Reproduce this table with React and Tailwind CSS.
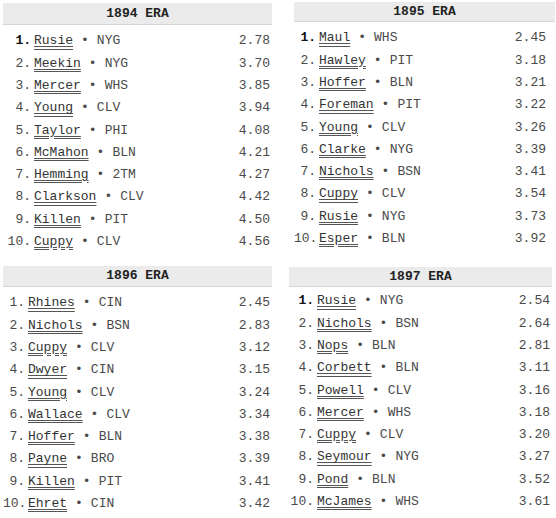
const panels = [
  {
    title: "1894 ERA",
    wrap: "ml-[3px] mt-[3px] w-[269px]",
    head: "h-[22px]",
    list: "mt-[5px]",
    rank: "w-[28px]",
    era: "pr-[2px]",
    bold: true,
    rows: [
      ["Rusie", "NYG", "2.78"],
      ["Meekin", "NYG", "3.70"],
      ["Mercer", "WHS", "3.85"],
      ["Young", "CLV", "3.94"],
      ["Taylor", "PHI", "4.08"],
      ["McMahon", "BLN", "4.21"],
      ["Hemming", "2TM", "4.27"],
      ["Clarkson", "CLV", "4.42"],
      ["Killen", "PIT", "4.50"],
      ["Cuppy", "CLV", "4.56"],
    ],
  },
  {
    title: "1895 ERA",
    wrap: "ml-[22px] mt-[2px] w-[261px]",
    head: "h-[20px]",
    list: "mt-[5px]",
    rank: "w-[22px]",
    era: "pr-[9px]",
    bold: true,
    rows: [
      ["Maul", "WHS", "2.45"],
      ["Hawley", "PIT", "3.18"],
      ["Hoffer", "BLN", "3.21"],
      ["Foreman", "PIT", "3.22"],
      ["Young", "CLV", "3.26"],
      ["Clarke", "NYG", "3.39"],
      ["Nichols", "BSN", "3.41"],
      ["Cuppy", "CLV", "3.54"],
      ["Rusie", "NYG", "3.73"],
      ["Esper", "BLN", "3.92"],
    ],
  },
  {
    title: "1896 ERA",
    wrap: "ml-[3px] mt-0 w-[269px]",
    head: "h-[21px]",
    list: "mt-[5px]",
    rank: "w-[22px]",
    era: "pr-[2px]",
    bold: false,
    rows: [
      ["Rhines", "CIN", "2.45"],
      ["Nichols", "BSN", "2.83"],
      ["Cuppy", "CLV", "3.12"],
      ["Dwyer", "CIN", "3.15"],
      ["Young", "CLV", "3.24"],
      ["Wallace", "CLV", "3.34"],
      ["Hoffer", "BLN", "3.38"],
      ["Payne", "BRO", "3.39"],
      ["Killen", "PIT", "3.41"],
      ["Ehret", "CIN", "3.42"],
    ],
  },
  {
    title: "1897 ERA",
    wrap: "ml-[17px] mt-[1px] w-[263px]",
    head: "h-[20px]",
    list: "mt-[3px]",
    rank: "w-[25px]",
    era: "pr-[2px]",
    bold: true,
    rows: [
      ["Rusie", "NYG", "2.54"],
      ["Nichols", "BSN", "2.64"],
      ["Nops", "BLN", "2.81"],
      ["Corbett", "BLN", "3.11"],
      ["Powell", "CLV", "3.16"],
      ["Mercer", "WHS", "3.18"],
      ["Cuppy", "CLV", "3.20"],
      ["Seymour", "NYG", "3.27"],
      ["Pond", "BLN", "3.52"],
      ["McJames", "WHS", "3.61"],
    ],
  },
];

function Panel({ p }) {
  return (
    <div className={p.wrap}>
      <div
        className={`${p.head} flex items-center justify-center bg-[#ebebeb] border-b border-[#d6d6d6] text-[13px] font-bold text-[#222]`}
      >
        {p.title}
      </div>
      <div className={p.list}>
        {p.rows.map((r, i) => (
          <div key={i} className="h-[22.3px] flex items-center text-[13px] text-[#4a4a4a]">
            <span
              className={`${p.rank} text-right ${
                p.bold && i === 0 ? "font-bold text-[#111]" : ""
              }`}
            >
              {i + 1}.
            </span>
            <span className="ml-[3px] text-[#333] underline decoration-double decoration-[#555] underline-offset-2">
              {r[0]}
            </span>
            <span className="ml-[8px]">•</span>
            <span className="ml-[8px]">{r[1]}</span>
            <span className={`ml-auto ${p.era}`}>{r[2]}</span>
          </div>
        ))}
      </div>
    </div>
  );
}

export default function App() {
  return (
    <div className="w-[556px] h-[518px] bg-white font-['Liberation_Mono',monospace] overflow-hidden">
      <div className="h-[266px] flex items-start">
        <Panel p={panels[0]} />
        <Panel p={panels[1]} />
      </div>
      <div className="flex items-start">
        <Panel p={panels[2]} />
        <Panel p={panels[3]} />
      </div>
    </div>
  );
}
